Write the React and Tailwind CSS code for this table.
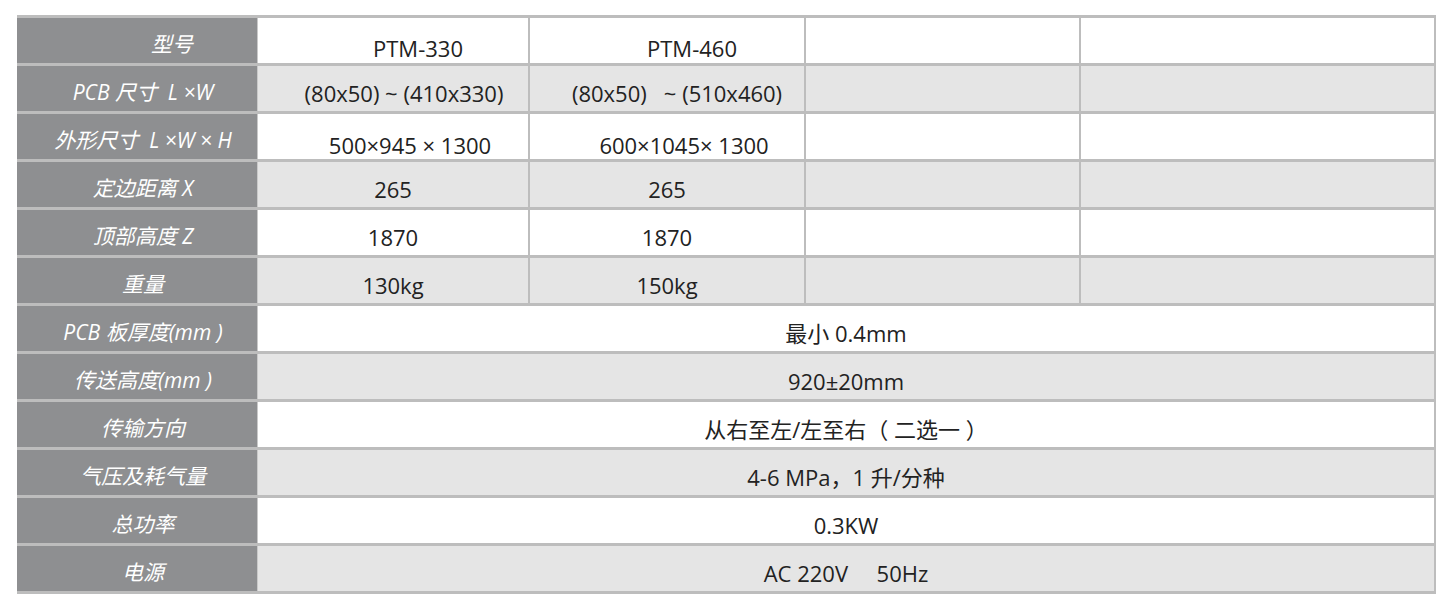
import React from 'react';

const rows = [
  { label: '型号', cells: ['PTM-330', 'PTM-460', '', ''], labelCls: 'pl-[70px]', cellCls: ['pl-[50px] pt-[16px]', 'pl-[50px] pt-[16px]', '', ''] },
  { label: 'PCB 尺寸  L ×W', cells: ['(80x50) ~ (410x330)', '(80x50)   ~ (510x460)', '', ''], cellCls: ['pl-[22px]', 'pl-[20px]', '', ''] },
  { label: '外形尺寸  L ×W × H', cells: ['500×945 × 1300', '600×1045× 1300', '', ''], labelCls: 'pl-[4px]', cellCls: ['pl-[34px] pt-[18px]', 'pl-[34px] pt-[18px]', '', ''] },
  { label: '定边距离 X', cells: ['265', '265', '', ''] },
  { label: '顶部高度 Z', cells: ['1870', '1870', '', ''] },
  { label: '重量', cells: ['130kg', '150kg', '', ''] },
  { label: 'PCB 板厚度(mm )', span: '最小 0.4mm' },
  { label: '传送高度(mm )', span: '920±20mm' },
  { label: '传输方向', span: '从右至左/左至右（ 二选一 ）' },
  { label: '气压及耗气量', span: '4-6 MPa，1 升/分种' },
  { label: '总功率', span: '0.3KW' },
  { label: '电源', span: 'AC 220V     50Hz' },
];

const widths = ['w-[272px]', 'w-[276px]', 'w-[275px]', 'flex-1'];

export default function App() {
  return (
    <div className="w-[1452px] h-[608px] bg-white pt-[15px] pl-[17px] font-['Open_Sans','Noto_Sans_CJK_SC',sans-serif] text-[22px] text-[#222]">
      <div className="w-[1419px] border-b-[3px] border-r-2 border-[#bdbdbd]">
        {rows.map((r, i) => (
          <div
            key={i}
            className={`flex h-[48px] border-t-[3px] border-[#bdbdbd] ${i % 2 === 0 ? 'bg-white' : 'bg-[#e5e5e5]'}`}
          >
            <div
              className={`w-[241px] shrink-0 bg-[#8e8f91] border-r border-[#c9c9c9] flex items-center justify-center pt-[8px] pl-[12px] italic text-white text-[21px] whitespace-pre ${r.labelCls || ''}`}
            >
              {r.label}
            </div>
            {r.span ? (
              <div className="flex-1 flex items-center justify-center pt-[10px] whitespace-pre">{r.span}</div>
            ) : (
              r.cells.map((c, j) => (
                <div
                  key={j}
                  className={`${widths[j]} shrink-0 ${j < 3 ? 'border-r-2 border-[#bdbdbd]' : ''} flex items-center justify-center pt-[10px] whitespace-pre ${(r.cellCls && r.cellCls[j]) || ''}`}
                >
                  {c}
                </div>
              ))
            )}
          </div>
        ))}
      </div>
    </div>
  );
}
